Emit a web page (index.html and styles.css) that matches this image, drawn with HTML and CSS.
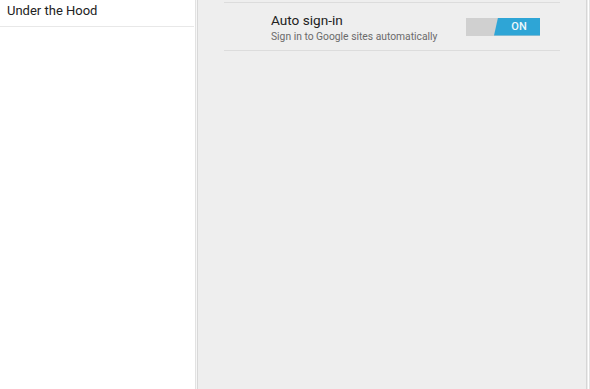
FILE: index.html
```html
<!DOCTYPE html>
<html>
<head>
<meta charset="utf-8">
<link rel="stylesheet" href="styles.css">
</head>
<body>
<div class="screen">
  <aside class="nav">
    <div class="nav-item">Under the Hood</div>
  </aside>
  <div class="gutter"></div>
  <main class="panel">
    <div class="list">
      <div class="row-prev"></div>
      <div class="row">
        <div class="row-text">
          <div class="title">Auto sign-in</div>
          <div class="summary">Sign in to Google sites automatically</div>
        </div>
        <div class="toggle">
          <div class="toggle-on">ON</div>
        </div>
      </div>
    </div>
  </main>
  <div class="edge"></div>
</div>
</body>
</html>
```
FILE: styles.css
```css
html, body {
  margin: 0;
  padding: 0;
  background: #ffffff;
}
body {
  font-family: Roboto, "Noto Sans", "Liberation Sans", sans-serif;
}
.screen {
  display: flex;
  width: 590px;
  height: 389px;
  overflow: hidden;
}
.nav {
  width: 195px;
  flex: none;
  background: #ffffff;
}
.nav-item {
  box-sizing: border-box;
  width: 194px;
  height: 27px;
  padding: 3px 0 0 7px;
  font-size: 13px;
  line-height: 15px;
  color: #222222;
  border-bottom: 1px solid #e8e8e8;
}
.gutter {
  width: 3px;
  flex: none;
  background: linear-gradient(to right, #e2e2e2 0 1px, #f6f6f6 1px 2px, #d8d8d8 2px 3px);
}
.panel {
  flex: 1;
  background: #eeeeee;
  padding: 0 26px;
  border-right: 1px solid #d6d6d6;
}
.edge {
  width: 3px;
  flex: none;
  background: linear-gradient(to right, #ececec 0 1px, #ffffff 1px 2px, #e2e2e2 2px 3px);
}
.list {
  display: flex;
  flex-direction: column;
}
.row-prev {
  height: 2px;
  border-bottom: 1px solid #dcdcdc;
}
.row {
  display: flex;
  align-items: center;
  justify-content: space-between;
  height: 47px;
  padding: 0 20px 0 47px;
  border-bottom: 1px solid #dcdcdc;
}
.row-text {
  align-self: flex-start;
  display: flex;
  flex-direction: column;
  gap: 2px;
  padding-top: 9px;
}
.title {
  font-size: 13.6px;
  line-height: 16px;
  color: #222222;
}
.summary {
  font-size: 10.3px;
  line-height: 13px;
  color: #6a6a6a;
}
.toggle {
  position: relative;
  width: 74px;
  height: 18px;
  background: #d0d0d0;
  flex: none;
}
.toggle-on {
  position: absolute;
  top: 0;
  right: 0;
  bottom: 0;
  left: 28px;
  background: #2ea5d6;
  clip-path: polygon(4px 0, 100% 0, 100% 100%, 0 100%);
  color: #eef8fc;
  font-size: 11px;
  font-weight: 500;
  line-height: 18px;
  text-align: center;
  padding-left: 4px;
  box-sizing: border-box;
}
```
